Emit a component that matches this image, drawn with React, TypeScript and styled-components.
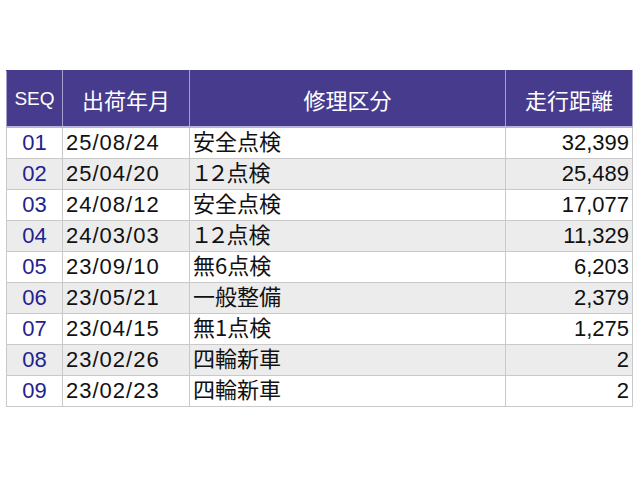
import React from "react";
import styled, { createGlobalStyle } from "styled-components";

const Global = createGlobalStyle`
  html, body { margin: 0; padding: 0; background: #ffffff; }
  body { font-family: "Liberation Sans", "Noto Sans CJK JP", sans-serif; }
`;

const Page = styled.div`
  padding: 70px 0 0 6px;
`;

const Table = styled.table`
  border-collapse: collapse;
  table-layout: fixed;
  width: 622px;
  font-family: "Liberation Sans", "Noto Sans CJK JP", sans-serif;
  font-size: 22px;
  border: 1px solid #c9c9c9;
`;

const HeadCell = styled.th<{ $w: number; $small?: boolean }>`
  width: ${(p) => p.$w}px;
  height: 55px;
  padding: 0;
  background: #473b8e;
  color: #ffffff;
  font-weight: normal;
  font-size: ${(p) => (p.$small ? "19px" : "22px")};
  text-align: center;
  vertical-align: middle;
  border: 1px solid #a59fd0;
  border-top-color: #473b8e;
  border-bottom: 2px solid #b9b4dc;
`;

const Row = styled.tr<{ $alt: boolean }>`
  background: ${(p) => (p.$alt ? "#ececec" : "#ffffff")};
`;

const Cell = styled.td<{
  $align: "left" | "center" | "right";
  $seq?: boolean;
  $cjk?: boolean;
}>`
  height: 30px;
  box-sizing: border-box;
  padding: 0 ${(p) => (p.$align === "right" ? "3px" : "0")}
    ${(p) => (p.$cjk ? "6px" : "0")}
    ${(p) => (p.$align === "left" ? "3px" : "0")};
  text-align: ${(p) => p.$align};
  vertical-align: middle;
  color: ${(p) => (p.$seq ? "#1f2290" : "#111111")};
  border: 1px solid #c9c9c9;
  line-height: ${(p) => (p.$cjk ? "24px" : "30px")};
  white-space: nowrap;
  font-family: ${(p) =>
    p.$cjk
      ? `"Noto Sans CJK JP", sans-serif`
      : `"Liberation Sans", "Noto Sans CJK JP", sans-serif`};
  font-feature-settings: ${(p) => (p.$cjk ? `"palt"` : "normal")};
`;

const Digits = styled.span`
  letter-spacing: 1px;
`;

const rows = [
  ["01", "25/08/24", "安全点検", "32,399"],
  ["02", "25/04/20", "１２点検", "25,489"],
  ["03", "24/08/12", "安全点検", "17,077"],
  ["04", "24/03/03", "１２点検", "11,329"],
  ["05", "23/09/10", "無6点検", "6,203"],
  ["06", "23/05/21", "一般整備", "2,379"],
  ["07", "23/04/15", "無1点検", "1,275"],
  ["08", "23/02/26", "四輪新車", "2"],
  ["09", "23/02/23", "四輪新車", "2"],
];

export default function App() {
  return (
    <>
      <Global />
      <Page>
        <Table>
          <thead>
            <tr>
              <HeadCell $w={55} $small>SEQ</HeadCell>
              <HeadCell $w={126}>出荷年月</HeadCell>
              <HeadCell $w={315}>修理区分</HeadCell>
              <HeadCell $w={126}>走行距離</HeadCell>
            </tr>
          </thead>
          <tbody>
            {rows.map((r, i) => (
              <Row key={r[0]} $alt={i % 2 === 1}>
                <Cell $align="center" $seq>{r[0]}</Cell>
                <Cell $align="left"><Digits>{r[1]}</Digits></Cell>
                <Cell $align="left" $cjk>{r[2]}</Cell>
                <Cell $align="right">{r[3]}</Cell>
              </Row>
            ))}
          </tbody>
        </Table>
      </Page>
    </>
  );
}
